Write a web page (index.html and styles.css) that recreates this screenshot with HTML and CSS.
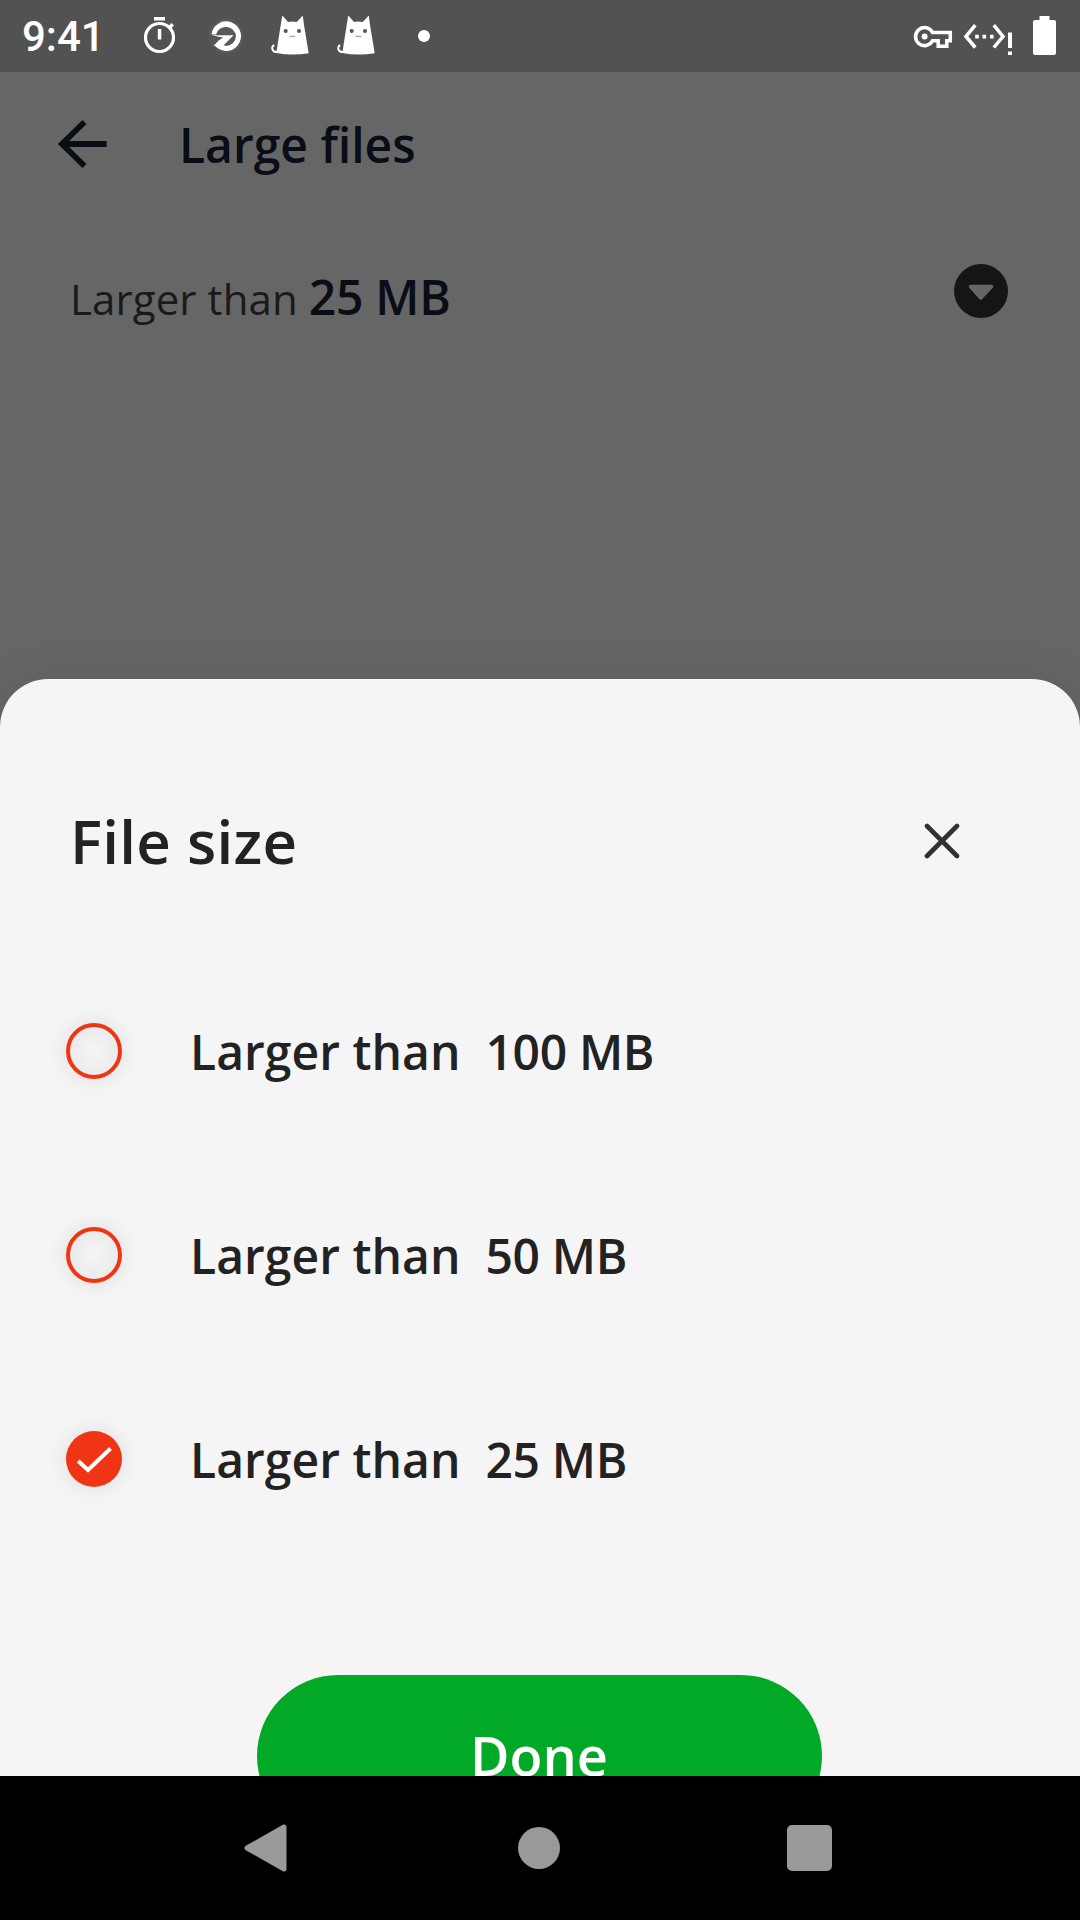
FILE: index.html
```html
<!DOCTYPE html>
<html lang="en">
<head>
<meta charset="utf-8">
<title>Large files</title>
<link rel="stylesheet" href="styles.css">
</head>
<body>
<div class="screen">
  <header class="status">
    <span class="clock">9:41</span>
    <svg class="timer" viewBox="140 0 40 72" width="40" height="72"><circle cx="159.500" cy="37.500" r="14" fill="none" stroke="#fff" stroke-width="3.200"/><path d="M154 17h11v3.600h-11zM157.800 29h3.500v10.500h-3.500zM168.500 26l3-3 2.500 2.500-3 3z" fill="#fff"/></svg>
    <svg class="proxy" viewBox="205 0 40 72" width="40" height="72"><circle cx="226" cy="36" r="17.500" fill="#595959"/><path d="M211.500 34.500A14.800 14.800 0 1 1 214 44.500L222 44.500 226 46A10.300 10.300 0 0 0 236 36 10.200 10.200 0 0 0 216 34.500Z" fill="#fff"/><path d="M211.200 34.500 216 35.300H233.500L223 46H214L220.500 37.800Z" fill="#fff"/><path d="M212.500 36.500 221.500 37.800 213 43.500M213.500 40 221 38" fill="none" stroke="#555" stroke-width="1.200"/></svg>
    <svg class="cat" viewBox="268 0 44 72" width="44" height="72"><g id="cat"><path d="M282.300 15.500 288 22Q292 20.800 296.800 22L302.800 15.500 304 25 308.700 53.300Q292 56 276.300 53L280.700 25Z" fill="#fff"/><path d="M277.500 52C272 52.500 270.500 46.500 274.300 45.300" fill="none" stroke="#fff" stroke-width="2"/><circle cx="285.700" cy="31" r="2" fill="#555"/><circle cx="299" cy="31" r="2" fill="#555"/><path d="M289.500 37q1.500-1.400 2.900-.3 1.500-1.100 2.900.3" fill="none" stroke="#aaa" stroke-width="1.200"/></g></svg>
    <svg class="cat" viewBox="268 0 44 72" width="44" height="72"><use href="#cat"/></svg>
    <span class="more"></span>
    <svg class="system" viewBox="910 0 150 72" width="150" height="72">
      <g fill="none" stroke="#fff" stroke-width="3.500"><path d="M932.500 32.400A9 9 0 1 0 932.500 40.800H938.200V46.300H946.800V40.800H950.300V32.400Z"/><path d="M975.300 25.200 966 36.500 975.300 47.500M993.800 25.200 1003 36.500 993.800 47.500"/></g>
      <circle cx="924.600" cy="36.500" r="3" fill="#fff"/>
      <path d="M975.200 34.800h3.600v3.600h-3.600zM982.500 34.800h3.600v3.600h-3.600zM990 34.800h3.600v3.600H990zM1008 32.500h4v15.500h-4zM1008 51.500h4v3.500h-4zM1039.500 16h10v4h4.500q2 0 2 2V53q0 2-2 2h-19q-2 0-2-2V22q0-2 2-2h4.500z" fill="#fff"/>
    </svg>
  </header>

  <main class="page">
    <div class="appbar">
      <svg class="back" viewBox="56 118 54 52" width="54" height="52"><path d="M106.700 144H62M84.500 122 62 144 84.500 166" fill="none" stroke="#090d16" stroke-width="5.800"/></svg>
      <h1 class="title">Large files</h1>
    </div>
    <div class="filter">
      <p class="current">Larger than <strong>25 MB</strong></p>
      <svg class="drop" viewBox="0 0 54 54" width="54" height="54"><circle cx="27" cy="27" r="27" fill="#151515"/><path d="M16.500 22.500H37.500L26.800 34Z" fill="#666" stroke="#666" stroke-width="3.500" stroke-linejoin="round"/></svg>
    </div>
  </main>

  <section class="sheet">
    <div class="sheethead">
      <h2 class="heading">File size</h2>
      <svg viewBox="0 0 36 36" width="36" height="36"><path d="M3 3 33 33M33 3 3 33" fill="none" stroke="#303231" stroke-width="4.600" stroke-linecap="round"/></svg>
    </div>
    <div class="options">
      <div class="option"><span class="radio"></span><span class="label">Larger than  <span class="size">100 MB</span></span></div>
      <div class="option"><span class="radio"></span><span class="label">Larger than  <span class="size">50 MB</span></span></div>
      <div class="option"><span class="radio checked"><svg viewBox="0 0 56 56" width="56" height="56"><path d="M12.200 30 22 39 44.500 17.500" fill="none" stroke="#fff" stroke-width="4"/></svg></span><span class="label">Larger than  <span class="size">25 MB</span></span></div>
    </div>
    <div class="done">Done</div>
  </section>

  <nav class="nav">
    <svg viewBox="0 0 44 50" width="44" height="50"><path d="M3 25 40 4V46Z" fill="#999" stroke="#999" stroke-width="5" stroke-linejoin="round"/></svg>
    <span class="home"></span>
    <span class="recent"></span>
  </nav>
</div>
</body>
</html>
```
FILE: styles.css
```css
* { box-sizing: border-box; margin: 0; padding: 0; }
body { width: 1080px; height: 1920px; background: #000; font-family: "Open Sans", sans-serif; }
svg { display: block; flex: none; }
.screen { display: flex; flex-direction: column; width: 1080px; height: 1920px; overflow: hidden; background: #666; }

.status { display: flex; align-items: center; flex: none; height: 72px; padding: 0 20px 0 22px; background: #525252; color: #fff; }
.clock { width: 118px; font: 500 42px/77px Roboto, sans-serif; white-space: nowrap; }
.proxy { margin-left: 25px; }
.cat { margin-left: 22px; }
.proxy + .cat { margin-left: 23px; }
.more { width: 12px; height: 12px; margin-left: 40px; border-radius: 50%; background: #fff; }
.system { margin-left: auto; }

.page { flex: none; height: 607px; }
.appbar { display: flex; align-items: center; height: 143px; padding-left: 56px; }
.title { margin-left: 69px; padding-top: 1px; font-size: 48px; font-weight: 600; color: #090d16; }
.filter { display: flex; align-items: center; justify-content: space-between; height: 152px; padding: 0 72px 0 70px; }
.current { padding-top: 14px; font-size: 42px; line-height: 66px; letter-spacing: .1px; color: #1a1a1a; white-space: nowrap; }
.current strong { font-size: 48px; font-weight: 600; letter-spacing: -.3px; color: #090d16; }

.sheet { display: flex; flex-direction: column; flex: none; height: 1097px; padding-top: 121px; overflow: hidden; background: #f5f5f5; border-radius: 48px 48px 0 0; box-shadow: 0 0 48px rgba(0, 0, 0, .09); }
.sheethead { display: flex; align-items: center; justify-content: space-between; height: 82px; padding: 0 120px 0 70px; }
.heading { font-size: 60px; font-weight: 600; letter-spacing: .3px; color: #222; }
.options { padding: 67px 0 0 66px; }
.option { display: flex; align-items: center; height: 204px; }
.radio { flex: none; width: 56px; height: 56px; border: 4px solid #f03514; border-radius: 50%; background: radial-gradient(#f5f5f5, #e7e7e7); box-shadow: 0 0 22px rgba(0, 0, 0, .1); }
.checked { border: 0; background: #f03514; }
.label { margin-left: 68px; font-size: 48px; font-weight: 600; letter-spacing: .05px; color: #222; white-space: pre; }
.size { letter-spacing: -.35px; }
.done { flex: none; width: 565px; height: 162px; margin: 114px 0 0 256.5px; border-radius: 81px; background: #02a926; color: #fff; font-size: 54px; font-weight: 600; line-height: 161px; text-align: center; }

.nav { display: flex; align-items: center; flex: none; height: 144px; padding: 0 248px 0 244px; background: #000; }
.home { width: 42px; height: 42px; margin-left: 230px; border-radius: 50%; background: #999; }
.recent { width: 45px; height: 46px; margin-left: auto; border-radius: 5px; background: #999; }
```
